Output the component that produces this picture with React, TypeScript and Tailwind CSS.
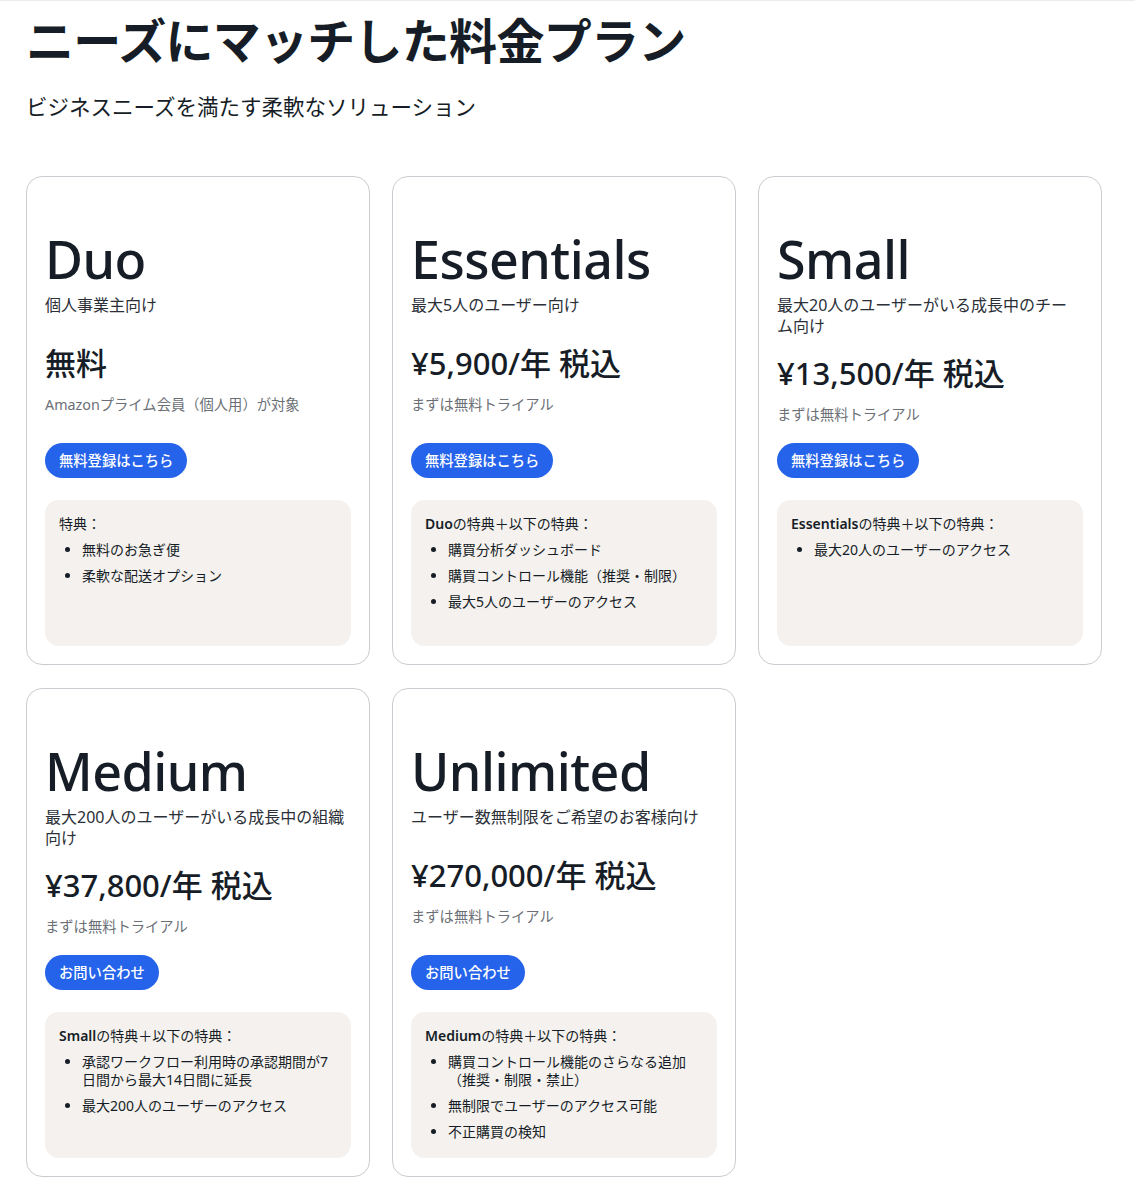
const font = "font-['Noto_Sans','Noto_Sans_CJK_JP',sans-serif]";

type Plan = {
  name: string;
  target: string;
  price: string;
  note: string;
  cta: string;
  perksTitle: { bold?: string; rest: string };
  perks: string[];
};

const plans: Plan[] = [
  {
    name: "Duo",
    target: "個人事業主向け",
    price: "無料",
    note: "Amazonプライム会員（個人用）が対象",
    cta: "無料登録はこちら",
    perksTitle: { rest: "特典：" },
    perks: ["無料のお急ぎ便", "柔軟な配送オプション"],
  },
  {
    name: "Essentials",
    target: "最大5人のユーザー向け",
    price: "¥5,900/年 税込",
    note: "まずは無料トライアル",
    cta: "無料登録はこちら",
    perksTitle: { bold: "Duo", rest: "の特典＋以下の特典：" },
    perks: [
      "購買分析ダッシュボード",
      "購買コントロール機能（推奨・制限）",
      "最大5人のユーザーのアクセス",
    ],
  },
  {
    name: "Small",
    target: "最大20人のユーザーがいる成長中のチーム向け",
    price: "¥13,500/年 税込",
    note: "まずは無料トライアル",
    cta: "無料登録はこちら",
    perksTitle: { bold: "Essentials", rest: "の特典＋以下の特典：" },
    perks: ["最大20人のユーザーのアクセス"],
  },
  {
    name: "Medium",
    target: "最大200人のユーザーがいる成長中の組織向け",
    price: "¥37,800/年 税込",
    note: "まずは無料トライアル",
    cta: "お問い合わせ",
    perksTitle: { bold: "Small", rest: "の特典＋以下の特典：" },
    perks: [
      "承認ワークフロー利用時の承認期間が7日間から最大14日間に延長",
      "最大200人のユーザーのアクセス",
    ],
  },
  {
    name: "Unlimited",
    target: "ユーザー数無制限をご希望のお客様向け",
    price: "¥270,000/年 税込",
    note: "まずは無料トライアル",
    cta: "お問い合わせ",
    perksTitle: { bold: "Medium", rest: "の特典＋以下の特典：" },
    perks: [
      "購買コントロール機能のさらなる追加（推奨・制限・禁止）",
      "無制限でユーザーのアクセス可能",
      "不正購買の検知",
    ],
  },
];

function PlanCard({ plan }: { plan: Plan }) {
  return (
    <div className="flex flex-col rounded-2xl border border-[#c9ccd0] bg-white px-[18px] pb-[18px]">
      <div className="flex h-[266px] flex-col pt-[53px]">
        <h2 className="text-[52px] leading-[58px] font-medium tracking-[-0.01em] text-[#161d26]">
          {plan.name}
        </h2>
        <p className="mt-[7px] pr-[3px] text-[16px] leading-[21px] text-[#2b3038]">{plan.target}</p>
        <div className="flex flex-1 flex-col justify-center">
          <p className="text-[31px] leading-[36px] font-medium text-[#161d26]">{plan.price}</p>
          <p className="mt-[14px] text-[14.3px] leading-[20px] text-[#6b6f75]">{plan.note}</p>
        </div>
      </div>
      <button className="h-[35px] self-start rounded-full bg-[#2563eb] px-[14px] text-[14.3px] font-medium text-white">
        {plan.cta}
      </button>
      <div className="mt-[22px] h-[146px] rounded-[14px] bg-[#f4f1ee] px-[14px] pt-[15px]">
        <p className="text-[14px] leading-[18px] text-[#161d26]">
          {plan.perksTitle.bold && <span className="font-semibold">{plan.perksTitle.bold}</span>}
          {plan.perksTitle.rest}
        </p>
        <ul className="mt-2 list-disc space-y-2 pl-[23px] text-[14px] leading-[18px] text-[#161d26]">
          {plan.perks.map((perk) => (
            <li key={perk}>{perk}</li>
          ))}
        </ul>
      </div>
    </div>
  );
}

export default function App() {
  return (
    <div className={`${font} min-h-[1200px] border-t border-[#ececec] bg-white pl-[26px] pt-[8px]`}>
      <h1 className="text-[48px] leading-[64px] font-bold tracking-[-0.015em] text-[#161d26]">
        ニーズにマッチした料金プラン
      </h1>
      <p className="mt-[20px] text-[21.5px] leading-[28px] text-[#161d26]">
        ビジネスニーズを満たす柔軟なソリューション
      </p>
      <div className="mt-[55px] grid w-[1076px] grid-cols-3 gap-x-[22px] gap-y-[23px]">
        {plans.map((plan) => (
          <PlanCard key={plan.name} plan={plan} />
        ))}
      </div>
    </div>
  );
}
